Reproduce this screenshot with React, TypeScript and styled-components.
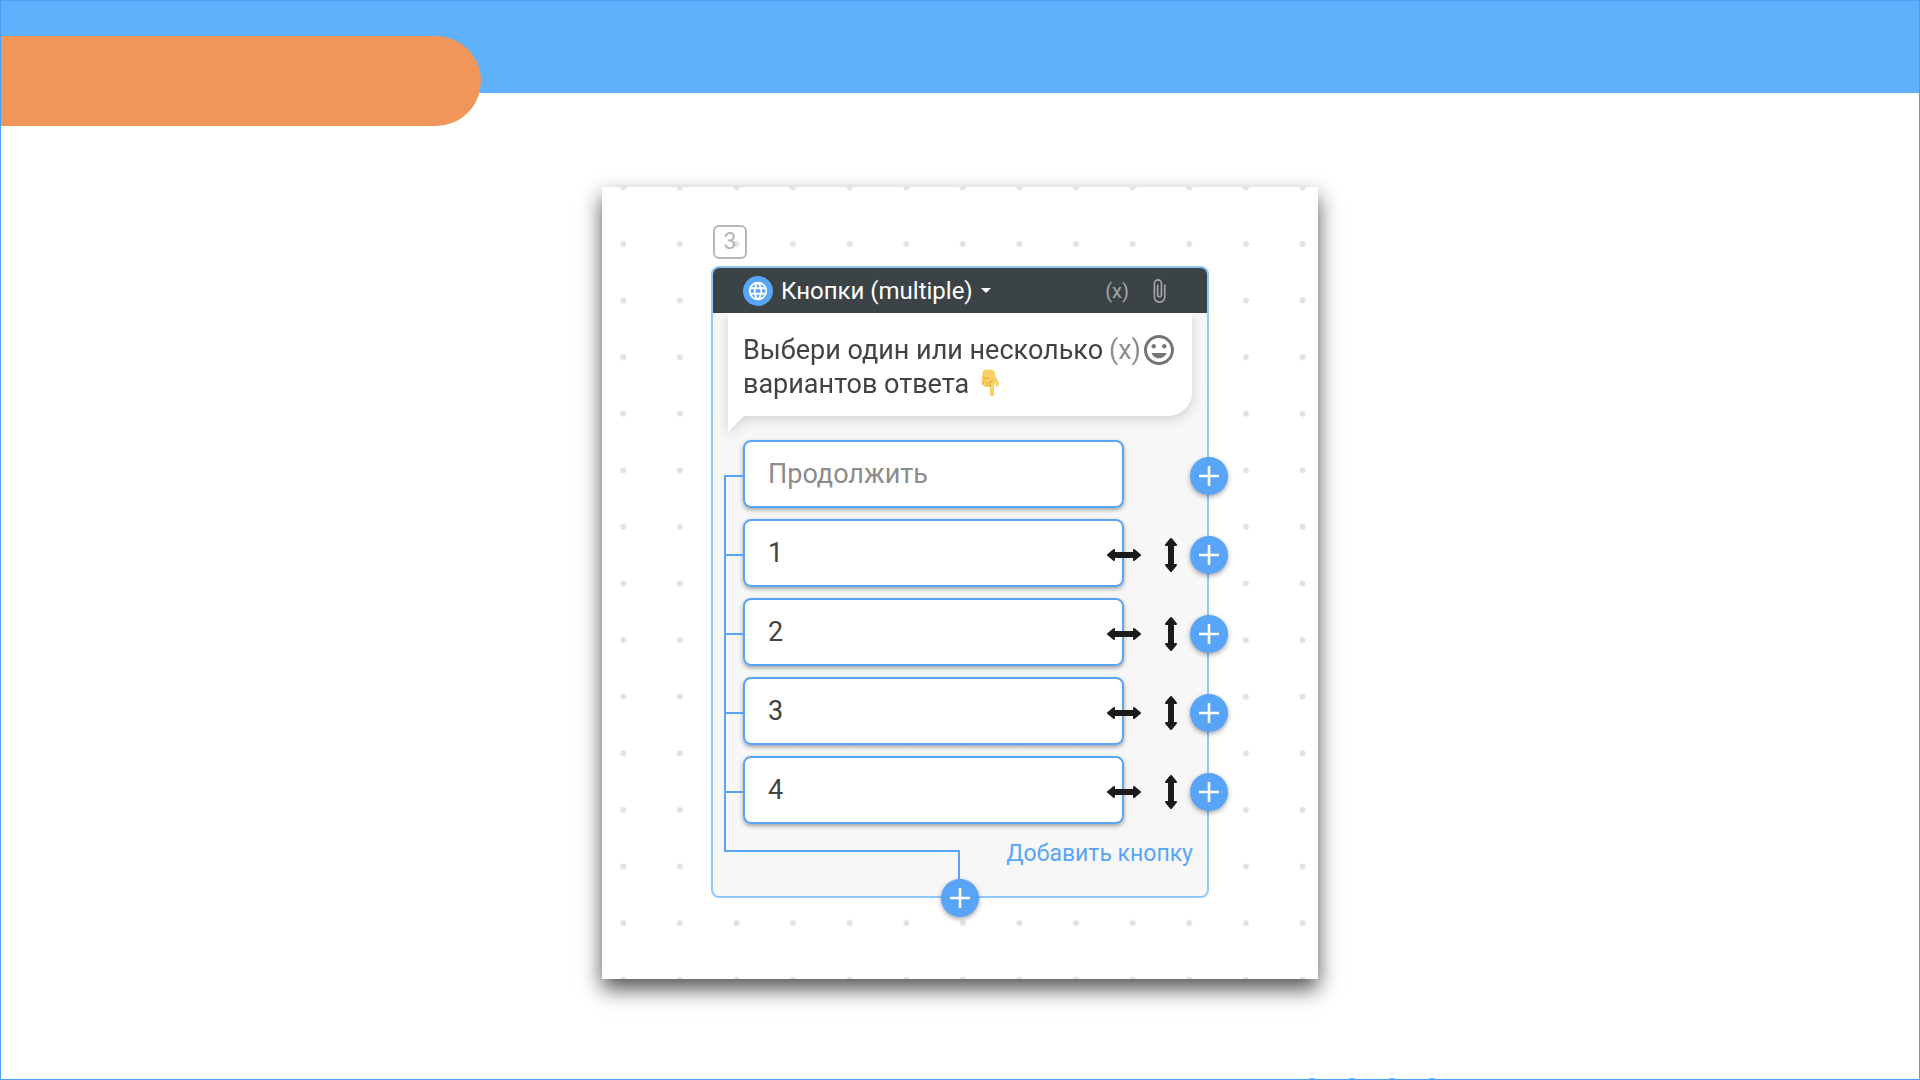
import React from "react";
import styled, { createGlobalStyle } from "styled-components";
import { MdLanguage, MdAttachFile, MdOutlineInsertEmoticon } from "react-icons/md";

const colors = {
  frame: "#4a9ff6",
  banner: "#5fb1fb",
  tag: "#f0965b",
  accent: "#58a5f7",
  cardBorder: "#8ecaff",
  header: "#3b4346",
  text: "#424242",
  muted: "#8c8c8c",
  icon: "#757575",
};

const GlobalStyle = createGlobalStyle`
  *, *::before, *::after { box-sizing: border-box; }
  body { margin: 0; background: #fff; font-family: Roboto, "Liberation Sans", sans-serif; }
  button, input { font: inherit; }
  button { border: 0; padding: 0; background: none; cursor: pointer; }
`;

const Page = styled.div`
  display: flex;
  flex-direction: column;
  align-items: stretch;
  min-height: 100vh;
  border: 1px solid ${colors.frame};
  background: #fff;
  overflow: hidden;
`;

const Banner = styled.header`
  height: 92px;
  padding-top: 35px;
  background: ${colors.banner};
`;

const Tag = styled.div`
  width: 25%;
  height: 90px;
  border-radius: 0 45px 45px 0;
  background: ${colors.tag};
`;

const Main = styled.main`
  flex: 1;
  display: flex;
  justify-content: center;
  align-items: flex-start;
  padding: 94px 20px 60px;
`;

const Panel = styled.section`
  position: relative;
  width: 716px;
  max-width: 100%;
  padding: 38px 109px 81px;
  background: #fff;
  box-shadow: 0 10px 20px rgba(0, 0, 0, 0.68);
`;

const Dots = styled.svg`
  position: absolute;
  inset: 0;
  width: 100%;
  height: 100%;
`;

const Block = styled.div`
  position: relative;
  display: flex;
  flex-direction: column;
  align-items: flex-start;
  gap: 7px;
`;

const StepBadge = styled.div`
  width: 34px;
  height: 34px;
  margin-left: 2px;
  border: 2px solid #b8b8b8;
  border-radius: 6px;
  color: #b4b4b4;
  font-size: 23px;
  line-height: 30px;
  text-align: center;
`;

const Card = styled.article`
  position: relative;
  align-self: stretch;
  border: 2px solid ${colors.cardBorder};
  border-radius: 8px;
  background: rgba(247, 247, 247, 0.96);
`;

const CardHeader = styled.div`
  position: relative;
  z-index: 1;
  display: flex;
  align-items: center;
  height: 45px;
  padding: 0 35px 0 30px;
  border-radius: 6px 6px 0 0;
  background: ${colors.header};
`;

const TypeIcon = styled.span`
  display: grid;
  place-items: center;
  width: 30px;
  height: 30px;
  border-radius: 50%;
  background: ${colors.accent};
  color: #fff;
  font-size: 22px;
`;

const TypeButton = styled.button`
  display: flex;
  align-items: center;
  gap: 8px;
  margin-right: auto;
  color: #fff;
  font-size: 24px;
  line-height: 30px;
`;

const Caret = styled.span`
  border: 5px solid transparent;
  border-top-color: #fff;
  border-bottom: 0;
`;

const IconButton = styled.button<{ $size: number; $color?: string }>`
  display: flex;
  align-items: center;
  color: ${(p) => p.$color ?? colors.muted};
  font-size: ${(p) => p.$size}px;
  line-height: 34px;
`;

const HeaderTools = styled.div`
  display: flex;
  align-items: center;
  gap: 17px;
`;

const Bubble = styled.div`
  position: relative;
  display: flex;
  align-items: flex-start;
  margin: 0 15px;
  padding: 20px 15px 15px;
  border-radius: 0 0 24px 0;
  background: #fff;
  filter: drop-shadow(0 3px 6px rgba(0, 0, 0, 0.16));

  &::after {
    content: "";
    position: absolute;
    left: 0;
    top: 100%;
    border: 8px solid transparent;
    border-top-color: #fff;
    border-left-color: #fff;
  }
`;

const Message = styled.p`
  flex: 1;
  margin: 0;
  color: ${colors.text};
  font-size: 27px;
  line-height: 34px;
  white-space: nowrap;
`;

const Emoji = styled.svg`
  width: 20px;
  height: 28px;
  margin-left: 4px;
  vertical-align: -4px;
`;

const BubbleTools = styled.div`
  display: flex;
  align-items: center;
  height: 34px;
`;

const Rows = styled.ul`
  position: relative;
  display: flex;
  flex-direction: column;
  gap: 11px;
  margin: 24px 0 0;
  padding: 0;
  list-style: none;

  &::before {
    content: "";
    position: absolute;
    left: 11px;
    top: 35px;
    bottom: -28px;
    border-left: 2px solid ${colors.accent};
  }
`;

const Row = styled.li`
  position: relative;
  display: flex;
  padding: 0 83px 0 30px;

  &::before {
    content: "";
    position: absolute;
    left: 11px;
    top: 35px;
    width: 19px;
    border-top: 2px solid ${colors.accent};
  }
`;

const Field = styled.input`
  flex: 1;
  min-width: 0;
  height: 68px;
  padding: 0 23px;
  border: 2px solid ${colors.accent};
  border-radius: 8px;
  outline: none;
  background: rgba(255, 255, 255, 0.96);
  box-shadow: 0 2px 4px rgba(0, 0, 0, 0.35);
  color: ${colors.text};
  font-size: 27px;

  &::placeholder { color: ${colors.muted}; opacity: 1; }
`;

const RowTools = styled.div`
  position: absolute;
  right: -21px;
  top: 17px;
  display: flex;
  align-items: center;
  height: 38px;
`;

const Handle = styled.button<{ $axis: "x" | "y" }>`
  display: grid;
  place-items: center;
  width: 36px;
  height: 36px;
  margin-right: ${(p) => (p.$axis === "x" ? 11 : 1)}px;
  cursor: ${(p) => (p.$axis === "x" ? "ew-resize" : "ns-resize")};

  svg { transform: rotate(${(p) => (p.$axis === "x" ? 0 : 90)}deg); }
`;

const PlusButton = styled.button`
  display: grid;
  place-items: center;
  width: 38px;
  height: 38px;
  border-radius: 50%;
  background: ${colors.accent};
  box-shadow: 0 2px 5px rgba(0, 0, 0, 0.35);
`;

const CardFooter = styled.div`
  position: relative;
  display: flex;
  justify-content: flex-end;
  padding: 15px 14px 27px;

  &::before {
    content: "";
    position: absolute;
    left: 11px;
    right: 50%;
    top: 26px;
    bottom: 0;
    border: solid ${colors.accent};
    border-width: 2px 2px 0 0;
  }
`;

const AddLink = styled.button`
  color: ${colors.accent};
  font-size: 23px;
  line-height: 30px;
`;

const NextSlot = styled.div`
  position: absolute;
  left: 50%;
  bottom: -21px;
  transform: translateX(-50%);
`;

const EdgeDots = styled.footer`
  display: flex;
  gap: 26px;
  height: 1px;
  padding-left: 68%;
  overflow: hidden;
`;

const EdgeDot = styled.span`
  flex: none;
  width: 14px;
  height: 14px;
  border-radius: 50%;
  background: ${colors.banner};
`;

const Plus = () => (
  <svg width="20" height="20" viewBox="0 0 20 20" fill="none" stroke="#fff" strokeWidth="2.600">
    <path d="M10 0v20M0 10h20" />
  </svg>
);

const DoubleArrow = () => (
  <svg width="36" height="14" viewBox="0 0 36 14" fill="#1b1b1b" stroke="#1b1b1b" strokeWidth="2" strokeLinejoin="round">
    <path d="M2 7 8 2v3h20V2l6 5-6 5V9H8v3z" />
  </svg>
);

const PointingDown = () => (
  <Emoji viewBox="0 0 20 28" role="img" aria-label="👇">
    <path
      fill="#fbd267"
      d="M3 1.500C5 .3 12 .2 14 1.500c1 .7 1 2.500 1 4.500l3.500 7c1 2 .8 3.500-.6 4.300-1 .5-2 0-2.600-1L14 14.500V25c0 1.500-.7 2.500-2 2.500s-2-1-2-2.500v-7.500c-1 1-2.600 1-3.300.1C5 18.200 3.600 17.400 3.400 16 2 15.900 1.200 14.800 1.200 13.500c0-2 .3-3.500.8-5.500z"
    />
    <path fill="none" stroke="#e2a63a" strokeWidth="1" d="M3.400 15.500 4 11M6.700 17.300l.3-5M10 18v-5.500c1.500 0 2.500-.8 3-2M2.500 7.500c2 2 5 2 7 1.500" />
  </Emoji>
);

const fields = [
  { value: "", placeholder: "Продолжить", movable: false },
  { value: "1", placeholder: "", movable: true },
  { value: "2", placeholder: "", movable: true },
  { value: "3", placeholder: "", movable: true },
  { value: "4", placeholder: "", movable: true },
];

export default function App() {
  return (
    <>
      <GlobalStyle />
      <Page>
        <Banner>
          <Tag />
        </Banner>
        <Main>
          <Panel>
            <Dots aria-hidden="true">
              <defs>
                <pattern id="grid" x="-7" y="-28" width="56.6" height="56.6" patternUnits="userSpaceOnUse">
                  <circle cx="28.300" cy="28.300" r="3" fill="#e2e2e2" />
                </pattern>
              </defs>
              <rect width="100%" height="100%" fill="url(#grid)" />
            </Dots>
            <Block>
              <StepBadge>3</StepBadge>
              <Card>
                <CardHeader>
                  <TypeButton type="button">
                    <TypeIcon>
                      <MdLanguage />
                    </TypeIcon>
                    Кнопки (multiple)
                    <Caret />
                  </TypeButton>
                  <HeaderTools>
                    <IconButton type="button" $size={20} $color="#a2a6a7" aria-label="Переменная">
                      (x)
                    </IconButton>
                    <IconButton type="button" $size={26} $color="#a2a6a7" aria-label="Вложение">
                      <MdAttachFile />
                    </IconButton>
                  </HeaderTools>
                </CardHeader>
                <Bubble>
                  <Message>
                    Выбери один или несколько
                    <br />
                    вариантов ответа <PointingDown />
                  </Message>
                  <BubbleTools>
                    <IconButton type="button" $size={27} aria-label="Переменная">
                      (x)
                    </IconButton>
                    <IconButton type="button" $size={36} $color={colors.icon} aria-label="Эмодзи">
                      <MdOutlineInsertEmoticon />
                    </IconButton>
                  </BubbleTools>
                </Bubble>
                <Rows>
                  {fields.map((f, i) => (
                    <Row key={i}>
                      <Field type="text" defaultValue={f.value} placeholder={f.placeholder} aria-label={`Кнопка ${i}`} />
                      <RowTools>
                        {f.movable && (
                          <>
                            <Handle type="button" $axis="x" aria-label="Ширина">
                              <DoubleArrow />
                            </Handle>
                            <Handle type="button" $axis="y" aria-label="Порядок">
                              <DoubleArrow />
                            </Handle>
                          </>
                        )}
                        <PlusButton type="button" aria-label="Добавить переход">
                          <Plus />
                        </PlusButton>
                      </RowTools>
                    </Row>
                  ))}
                </Rows>
                <CardFooter>
                  <AddLink type="button">Добавить кнопку</AddLink>
                  <NextSlot>
                    <PlusButton type="button" aria-label="Следующий шаг">
                      <Plus />
                    </PlusButton>
                  </NextSlot>
                </CardFooter>
              </Card>
            </Block>
          </Panel>
        </Main>
        <EdgeDots aria-hidden="true">
          <EdgeDot />
          <EdgeDot />
          <EdgeDot />
          <EdgeDot />
        </EdgeDots>
      </Page>
    </>
  );
}
